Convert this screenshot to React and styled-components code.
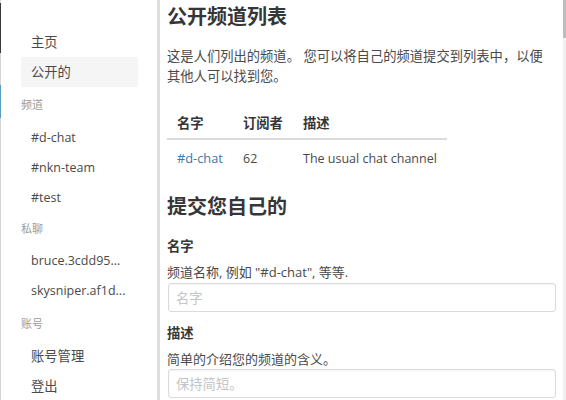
import styled, { createGlobalStyle } from 'styled-components';

const GlobalStyle = createGlobalStyle`
	html, body {
		margin: 0;
		padding: 0;
		height: 400px;
		overflow: hidden;
		background: #fff;
	}
	body {
		font-family: "Open Sans", "Noto Sans CJK SC", sans-serif;
		color: #4a4a4a;
	}
`;

const Page = styled.div`
	display: flex;
	width: 566px;
	height: 400px;
	overflow: hidden;
	background: #fff;
`;

const EdgeStrip = styled.div`
	width: 1px;
	flex: none;
	background: linear-gradient(#ddd 0 3px, #3a3a3a 3px 53px, #d4d4d4 53px 85px, #5a9cc0 85px 118px, #d4d4d4 118px);
`;

const Sidebar = styled.aside`
	width: 156px;
	flex: none;
	box-sizing: border-box;
	padding: 27px 19px 0 20px;
`;

const Gutter = styled.div`
	width: 3px;
	flex: none;
	background: #dedede;
`;

const Menu = styled.ul`
	list-style: none;
	margin: 0 0 ${(p) => p.$after}px;
	padding: 0;
`;

const MenuLabel = styled.p`
	margin: 0 0 ${(p) => p.$after}px;
	height: 16px;
	line-height: 16px;
	font-size: 11px;
	color: #9a9a9a;
`;

const MenuItem = styled.li`
	height: 30px;
	line-height: 30px;
	padding-left: 10px;
	font-size: ${(p) => (p.$latin ? '12.5px' : '13.3px')};
	color: #4a4a4a;
	white-space: nowrap;
	background: ${(p) => (p.$active ? '#f5f5f5' : 'transparent')};
	border-radius: 2px;
`;

const Main = styled.main`
	flex: 1;
	min-width: 0;
	box-sizing: border-box;
	padding: 0 10px 0 7px;
`;

const Title = styled.h1`
	margin: 0;
	height: 34px;
	line-height: 34px;
	font-size: 20px;
	font-weight: 700;
	color: #363636;
`;

const Intro = styled.p`
	margin: 12px 0 0;
	font-size: 13.3px;
	line-height: 20px;
	color: #4a4a4a;
`;

const Table = styled.table`
	margin-top: 20px;
	border-collapse: collapse;
	table-layout: fixed;
	width: 280px;
	font-size: 12.5px;
`;

const HeadCell = styled.th`
	width: ${(p) => p.$width}px;
	box-sizing: border-box;
	text-align: left;
	font-size: 13.3px;
	font-weight: 700;
	color: #363636;
	height: 33px;
	padding: 0 0 0 10px;
	border-bottom: 2px solid #dbdbdb;
`;

const Cell = styled.td`
	height: 36px;
	padding: 0 0 0 10px;
	color: #4a4a4a;
	white-space: nowrap;
`;

const ChannelLink = styled.a`
	color: #3f76ab;
	text-decoration: none;
	font-size: 12.8px;
`;

const SubTitle = styled(Title)`
	margin-top: 14px;
`;

const Field = styled.div`
	display: flex;
	flex-direction: column;
	margin-top: ${(p) => p.$top}px;
`;

const FieldLabel = styled.label`
	font-size: 13.3px;
	font-weight: 700;
	line-height: 20px;
	color: #363636;
`;

const Help = styled.p`
	margin: 7px 0 0;
	font-size: 13px;
	line-height: 18px;
	color: #4a4a4a;
`;

const Input = styled.input`
	box-sizing: border-box;
	width: 388px;
	height: 29px;
	margin: ${(p) => p.$top}px 0 0 1px;
	padding: 0 7px;
	border: 1px solid #dbdbdb;
	border-radius: 3px;
	box-shadow: inset 0 1px 2px rgba(10, 10, 10, 0.05);
	font: inherit;
	font-size: 13.3px;
	outline: none;
	&::placeholder {
		color: #c4c4c4;
	}
`;

const Track = styled.div`
	width: 3px;
	flex: none;
	background: linear-gradient(#bdbdbd 0 38px, #f0f0f0 38px);
`;

const MENU = [
	{ items: ['主页', '公开的'], active: '公开的', after: 10 },
	{ label: '频道', labelAfter: 10, latin: true, items: ['#d-chat', '#nkn-team', '#test'], after: 8 },
	{ label: '私聊', labelAfter: 9, latin: true, items: ['bruce.3cdd95...', 'skysniper.af1d...'], after: 10 },
	{ label: '账号', labelAfter: 9, items: ['账号管理', '登出'], after: 0 },
];

export default function App() {
	return (
		<Page>
			<GlobalStyle />
			<EdgeStrip />
			<Sidebar>
				{MENU.map((group, i) => (
					<div key={i}>
						{group.label && <MenuLabel $after={group.labelAfter}>{group.label}</MenuLabel>}
						<Menu $after={group.after}>
							{group.items.map((item) => (
								<MenuItem key={item} $latin={group.latin} $active={item === group.active}>
									{item}
								</MenuItem>
							))}
						</Menu>
					</div>
				))}
			</Sidebar>
			<Gutter />
			<Main>
				<Title>公开频道列表</Title>
				<Intro>这是人们列出的频道。 您可以将自己的频道提交到列表中，以便其他人可以找到您。</Intro>
				<Table>
					<thead>
						<tr>
							<HeadCell $width={66}>名字</HeadCell>
							<HeadCell $width={60}>订阅者</HeadCell>
							<HeadCell $width={154}>描述</HeadCell>
						</tr>
					</thead>
					<tbody>
						<tr>
							<Cell><ChannelLink href="#">#d-chat</ChannelLink></Cell>
							<Cell>62</Cell>
							<Cell>The usual chat channel</Cell>
						</tr>
					</tbody>
				</Table>
				<SubTitle>提交您自己的</SubTitle>
				<Field $top={12}>
					<FieldLabel>名字</FieldLabel>
					<Help>频道名称, 例如 "#d-chat", 等等.</Help>
					<Input $top={2} placeholder="名字" />
				</Field>
				<Field $top={11}>
					<FieldLabel>描述</FieldLabel>
					<Help>简单的介绍您的频道的含义。</Help>
					<Input $top={1} placeholder="保持简短。" />
				</Field>
			</Main>
			<Track />
		</Page>
	);
}
